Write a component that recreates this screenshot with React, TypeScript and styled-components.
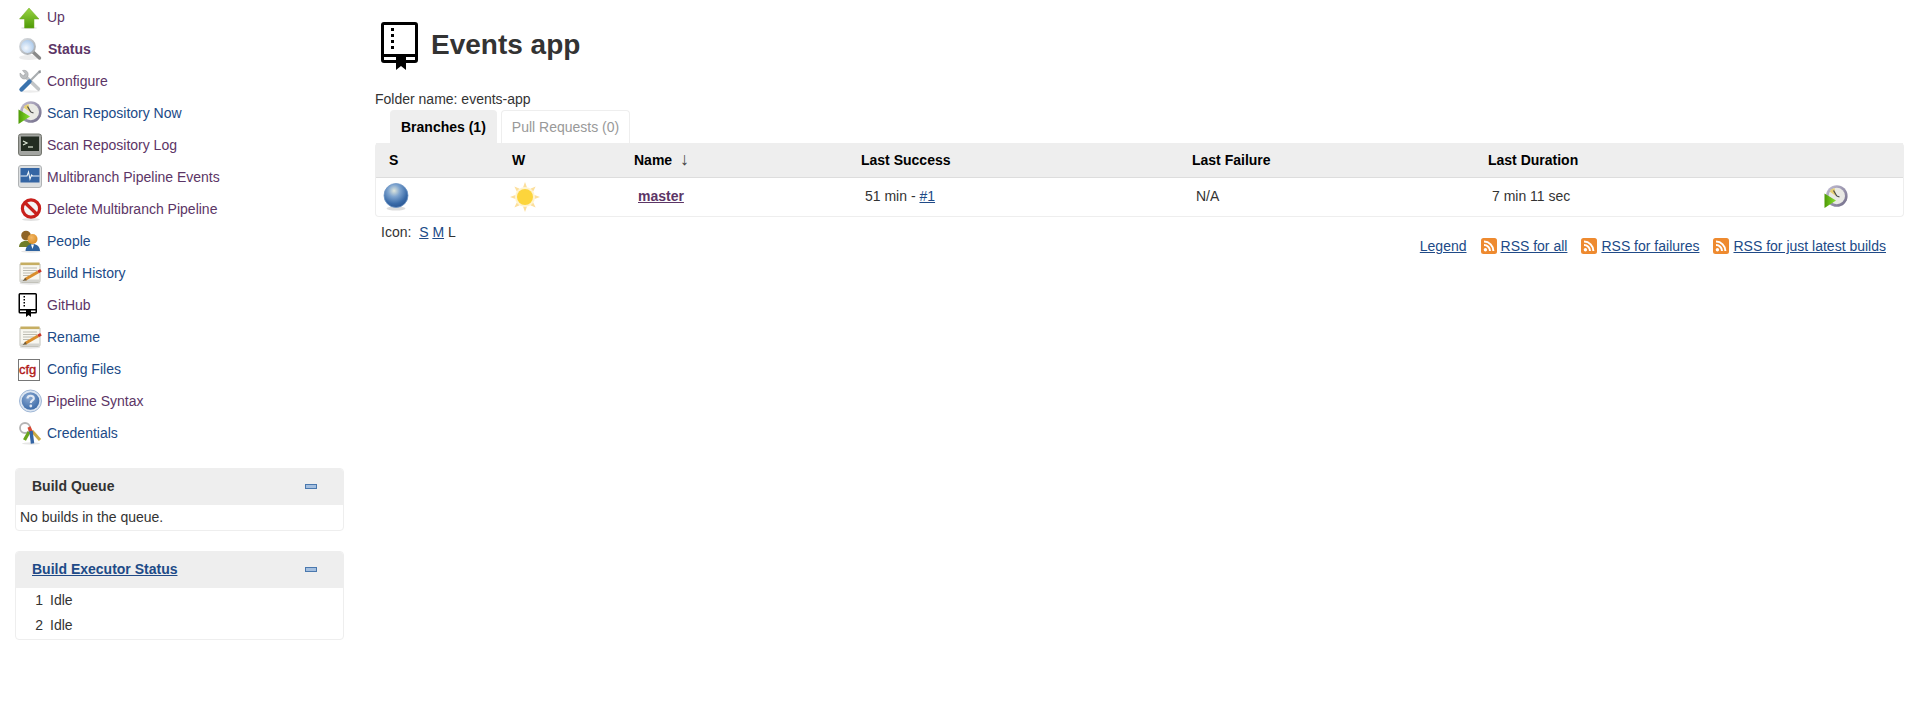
import React from 'react'
import styled, { createGlobalStyle } from 'styled-components'

const colors = {
  text: '#333333',
  link: '#204a87',
  visited: '#5c3566',
  panelHead: '#eeeeee',
  border: '#eeeeee',
}

const GlobalStyle = createGlobalStyle`
  html, body {
    margin: 0;
    padding: 0;
    background: #ffffff;
    color: ${colors.text};
    font-family: "Liberation Sans", Arial, sans-serif;
    font-size: 14px;
  }
`

function ArrowUpIcon() {
  return (
    <svg width="24" height="24" viewBox="0 0 24 24">
      <defs>
        <linearGradient id="arrowFill" x1="0" y1="0" x2="0" y2="1">
          <stop offset="0" stopColor="#9ad544" />
          <stop offset="1" stopColor="#4e9a06" />
        </linearGradient>
      </defs>
      <ellipse cx="11" cy="23" rx="8" ry="1" fill="#e2e2e2" />
      <path d="M11 3 L21 14 H16 V23 H6.5 V14 H1.5 Z" fill="url(#arrowFill)" stroke="#72ab24" strokeWidth="0.5" />
    </svg>
  )
}

function SearchIcon() {
  return (
    <svg width="24" height="24" viewBox="0 0 24 24">
      <defs>
        <radialGradient id="lensFill" cx="0.4" cy="0.6" r="0.7">
          <stop offset="0" stopColor="#f4f8fd" />
          <stop offset="1" stopColor="#9cc0e8" />
        </radialGradient>
        <linearGradient id="lensRing" x1="0" y1="0" x2="1" y2="1">
          <stop offset="0" stopColor="#d8dce0" />
          <stop offset="1" stopColor="#a3a8ad" />
        </linearGradient>
      </defs>
      <ellipse cx="11" cy="20.5" rx="10" ry="2.5" fill="#ececec" />
      <path d="M15 15 L21.5 21" stroke="#8a8a8a" strokeWidth="3.4" strokeLinecap="round" />
      <circle cx="9.5" cy="9.5" r="7.4" fill="url(#lensFill)" stroke="url(#lensRing)" strokeWidth="2" />
    </svg>
  )
}

function ToolsIcon() {
  return (
    <svg width="24" height="24" viewBox="0 0 24 24">
      <ellipse cx="12" cy="22.5" rx="10" ry="1.2" fill="#ececec" />
      <path d="M7 7 L20.5 20" stroke="#c2c5c7" strokeWidth="3.6" strokeLinecap="round" />
      <path d="M2 4 L5.5 7 L7.5 5 L4.5 1.5 C8 0.5 11 3 10 7 L7.5 10 C4 10.5 1.5 8 2 4 Z" fill="#bcbfc1" stroke="#96999b" strokeWidth="0.5" />
      <path d="M12 12 L21 3" stroke="#a9adb0" strokeWidth="2.2" />
      <path d="M20 2 L22.5 1 L23 3.5 L21.5 4.5 Z" fill="#8e9295" />
      <path d="M3.5 20.5 L11.5 12.5" stroke="#3a73ad" strokeWidth="4.4" strokeLinecap="round" />
    </svg>
  )
}

function ClockPlayIcon() {
  return (
    <svg width="24" height="24" viewBox="0 0 24 24">
      <defs>
        <linearGradient id="clockRing" x1="0" y1="0" x2="1" y2="1">
          <stop offset="0" stopColor="#c6c1d6" />
          <stop offset="1" stopColor="#6f6a86" />
        </linearGradient>
        <linearGradient id="playFill" x1="0" y1="0" x2="1" y2="0">
          <stop offset="0" stopColor="#4e9a06" />
          <stop offset="1" stopColor="#8ae234" />
        </linearGradient>
      </defs>
      <circle cx="12.8" cy="11" r="10.8" fill="url(#clockRing)" />
      <circle cx="12.8" cy="11" r="8.2" fill="#e9e9e4" />
      <path d="M12 11 L10.5 3 A8.2 8.2 0 0 0 5.6 6.5 Z" fill="#e6cf72" />
      <path d="M12.8 11 L9.5 5.5 M12.8 11 L15.5 12" stroke="#4a4a4a" strokeWidth="1.2" />
      <path d="M0.5 8.5 L12 15.5 L0.5 23 Z" fill="url(#playFill)" />
    </svg>
  )
}

function TerminalIcon() {
  return (
    <svg width="24" height="24" viewBox="0 0 24 24">
      <rect x="0.5" y="1" width="23" height="21.5" rx="2.5" fill="#a3a5a1" stroke="#74766f" />
      <rect x="3" y="3.5" width="18" height="14.5" fill="#232c22" />
      <path d="M5 8 L9 10 L5 12" fill="none" stroke="#dfe8d8" strokeWidth="1.2" />
      <path d="M10 14 H15" stroke="#dfe8d8" strokeWidth="1.2" />
    </svg>
  )
}

function MonitorIcon() {
  return (
    <svg width="24" height="24" viewBox="0 0 24 24">
      <rect x="0.5" y="0.5" width="23" height="22" rx="2.5" fill="#dcdfe1" stroke="#b0b3b5" />
      <rect x="2.5" y="3" width="19" height="14.5" fill="#3465a4" />
      <path d="M2.5 11 H9 L10.5 7 L12 14 L13.5 10 L14.5 11 H21.5" fill="none" stroke="#eef3f8" strokeWidth="1.1" />
    </svg>
  )
}

function NoEntryIcon() {
  return (
    <svg width="24" height="24" viewBox="0 0 24 24">
      <ellipse cx="13" cy="22.5" rx="9" ry="1.4" fill="#e2e2e2" />
      <circle cx="13" cy="11.5" r="8.6" fill="#f4f4f4" stroke="#c8201c" strokeWidth="3.2" />
      <path d="M6.8 5.5 L19.2 17.5" stroke="#c8201c" strokeWidth="3.2" />
    </svg>
  )
}

function PeopleIcon() {
  return (
    <svg width="24" height="24" viewBox="0 0 24 24">
      <defs>
        <radialGradient id="headFront" cx="0.4" cy="0.35" r="0.7">
          <stop offset="0" stopColor="#f3b866" />
          <stop offset="1" stopColor="#d98a22" />
        </radialGradient>
      </defs>
      <ellipse cx="13" cy="22.5" rx="10" ry="1.2" fill="#e6e6e6" />
      <circle cx="8" cy="6.5" r="4.8" fill="#8f6426" />
      <path d="M1 18 C1 9.5 15 9.5 15 18 Z" fill="#6f7d2a" />
      <path d="M7.5 22 C7.5 12.5 22 12.5 22 22 Z" fill="#2f639f" />
      <circle cx="14.5" cy="10" r="5" fill="url(#headFront)" />
      <path d="M13 15.5 H16 L14.5 20 Z" fill="#ffffff" />
    </svg>
  )
}

function NotepadIcon() {
  return (
    <svg width="24" height="24" viewBox="0 0 24 24">
      <ellipse cx="12" cy="22.5" rx="10.5" ry="1.2" fill="#e6e6e6" />
      <path d="M2 3 H22 V20 Q22 21.5 20.5 21.5 H3.5 Q2 21.5 2 20 Z" fill="#f8f7f0" stroke="#c0c0b8" />
      <rect x="2.5" y="1.5" width="19" height="2.6" fill="#c6ae62" />
      <rect x="2.5" y="18.5" width="19" height="2.6" fill="#d4d4cf" />
      <path d="M5 7 H19 M5 9.5 H19 M5 12 H16 M5 14.5 H11" stroke="#bdbcb2" strokeWidth="1" />
      <path d="M7 18.5 L20 11" stroke="#d98e2c" strokeWidth="3" />
      <path d="M20 11 L23 9.2" stroke="#c8382a" strokeWidth="3" />
      <path d="M4.5 20 L7.5 16.8 L8.8 19.2 Z" fill="#6b5a3c" />
    </svg>
  )
}

function BookIcon({ size }: { size: number }) {
  return (
    <svg width={size} height={size} viewBox="0 0 48 48">
      <path
        fillRule="evenodd"
        d="M4 0 H35 Q38 0 38 3 V38 Q38 41 35 41 H26 V48 L21 44 L16 48 V41 H4 Q1 41 1 38 V3 Q1 0 4 0 Z M4 3 V32 H35 V3 Z M4 35 V38 H16 V35 Z M26 35 V38 H35 V35 Z"
        fill="#000"
      />
      <path d="M11 6 H14 V9 H11 Z M11 12 H14 V15 H11 Z M11 18 H14 V21 H11 Z M11 24 H14 V27 H11 Z" fill="#000" />
    </svg>
  )
}

function CfgIcon() {
  return (
    <svg width="24" height="24" viewBox="0 0 24 24">
      <rect x="0.5" y="2.5" width="21" height="21" fill="#fff" stroke="#777" />
      <text x="1" y="17" fontFamily="Liberation Sans, sans-serif" fontSize="13" stroke="#b01818" strokeWidth="0.4" fill="#b01818">
        cfg
      </text>
    </svg>
  )
}

function HelpIcon() {
  return (
    <svg width="24" height="24" viewBox="0 0 24 24">
      <defs>
        <radialGradient id="helpFill" cx="0.4" cy="0.3" r="0.8">
          <stop offset="0" stopColor="#8aa9d2" />
          <stop offset="1" stopColor="#3465a4" />
        </radialGradient>
      </defs>
      <circle cx="12.5" cy="12" r="11" fill="#dbe5f1" stroke="#9fb7d6" />
      <circle cx="12.5" cy="12" r="8.8" fill="url(#helpFill)" />
      <path d="M9.5 9.5 C9.5 5.8 15.8 5.8 15.8 9.5 C15.8 11.5 12.8 11.5 12.8 14" fill="none" stroke="#dfe7f2" strokeWidth="2.2" />
      <circle cx="12.8" cy="17" r="1.4" fill="#dfe7f2" />
    </svg>
  )
}

function KeysIcon() {
  return (
    <svg width="24" height="24" viewBox="0 0 24 24">
      <ellipse cx="13" cy="22.5" rx="9" ry="1.2" fill="#e6e6e6" />
      <circle cx="7" cy="7" r="5" fill="none" stroke="#b4b4b4" strokeWidth="1.8" />
      <path d="M14 10 L22 19" stroke="#c9ab42" strokeWidth="3" />
      <path d="M11 6 L14 13" stroke="#d84a35" strokeWidth="3.4" />
      <path d="M11 11 L6.5 19" stroke="#6aa51c" strokeWidth="3.4" />
      <path d="M13 10 L14.5 22.5" stroke="#3465a4" strokeWidth="3.4" />
    </svg>
  )
}

function BallIcon() {
  return (
    <svg width="26" height="28" viewBox="0 0 26 28">
      <defs>
        <radialGradient id="ballFill" cx="0.42" cy="0.3" r="0.72">
          <stop offset="0" stopColor="#dfe6dc" />
          <stop offset="0.35" stopColor="#7ea4cf" />
          <stop offset="0.75" stopColor="#3a6ba8" />
          <stop offset="1" stopColor="#2a5692" />
        </radialGradient>
      </defs>
      <ellipse cx="13" cy="25.5" rx="9.5" ry="2" fill="#dddddd" />
      <circle cx="13" cy="12.5" r="12" fill="url(#ballFill)" stroke="#6f97c6" strokeWidth="0.8" />
    </svg>
  )
}

function SunIcon() {
  const rays = [0, 45, 90, 135, 180, 225, 270, 315]
  return (
    <svg width="30" height="30" viewBox="0 0 30 30">
      {rays.map((angle) => (
        <path key={angle} d="M13 5.5 L15 0 L17 5.5 Z" fill="#fcdf9c" transform={`rotate(${angle} 15 15)`} />
      ))}
      <circle cx="15" cy="15" r="10" fill="#fef3cf" />
      <circle cx="15" cy="15" r="8" fill="#fcd53c" />
    </svg>
  )
}

function RssIcon() {
  return (
    <svg width="16" height="16" viewBox="0 0 16 16">
      <rect width="16" height="16" rx="2.5" fill="#ee8a2f" />
      <circle cx="4.4" cy="11.8" r="1.7" fill="#fff" />
      <path d="M3 7 A6 6 0 0 1 9 13 M3 3.6 A9.4 9.4 0 0 1 12.4 13" fill="none" stroke="#fff" strokeWidth="2" />
    </svg>
  )
}

function MinusIcon() {
  return (
    <svg width="12" height="5" viewBox="0 0 12 5">
      <rect x="0.5" y="0.5" width="11" height="4" fill="#a4bfdf" stroke="#4a78ae" />
    </svg>
  )
}

const tasks = [
  { label: 'Up', icon: <ArrowUpIcon />, visited: true },
  { label: 'Status', icon: <SearchIcon />, visited: true, current: true },
  { label: 'Configure', icon: <ToolsIcon />, visited: true },
  { label: 'Scan Repository Now', icon: <ClockPlayIcon /> },
  { label: 'Scan Repository Log', icon: <TerminalIcon />, visited: true },
  { label: 'Multibranch Pipeline Events', icon: <MonitorIcon />, visited: true },
  { label: 'Delete Multibranch Pipeline', icon: <NoEntryIcon />, visited: true },
  { label: 'People', icon: <PeopleIcon /> },
  { label: 'Build History', icon: <NotepadIcon /> },
  { label: 'GitHub', icon: <BookIcon size={24} />, visited: true },
  { label: 'Rename', icon: <NotepadIcon /> },
  { label: 'Config Files', icon: <CfgIcon /> },
  { label: 'Pipeline Syntax', icon: <HelpIcon />, visited: true },
  { label: 'Credentials', icon: <KeysIcon /> },
]

export default function App() {
  return (
    <>
      <GlobalStyle />
      <Page>
        <SidePanel>
          <Tasks>
            {tasks.map((task) => (
              <Task key={task.label}>
                <TaskIcon>{task.icon}</TaskIcon>
                <TaskLink href="#" $visited={task.visited} $current={task.current}>
                  {task.label}
                </TaskLink>
              </Task>
            ))}
          </Tasks>

          <Pane>
            <PaneHeader>
              <PaneTitle>Build Queue</PaneTitle>
              <MinusIcon />
            </PaneHeader>
            <QueueBody>No builds in the queue.</QueueBody>
          </Pane>

          <Pane>
            <PaneHeader>
              <PaneTitleLink href="#">Build Executor Status</PaneTitleLink>
              <MinusIcon />
            </PaneHeader>
            <ExecutorBody>
              <ExecutorRow>
                <ExecutorNumber>1</ExecutorNumber>
                <span>Idle</span>
              </ExecutorRow>
              <ExecutorRow>
                <ExecutorNumber>2</ExecutorNumber>
                <span>Idle</span>
              </ExecutorRow>
            </ExecutorBody>
          </Pane>
        </SidePanel>

        <Main>
          <Heading>
            <BookIcon size={48} />
            <Title>Events app</Title>
          </Heading>
          <FolderName>Folder name: events-app</FolderName>
          <Tabs>
            <Tab $active>Branches (1)</Tab>
            <Tab>Pull Requests (0)</Tab>
          </Tabs>
          <Projects>
            <colgroup>
              <col width="123" />
              <col width="122" />
              <col width="227" />
              <col width="331" />
              <col width="296" />
              <col width="338" />
              <col />
            </colgroup>
            <thead>
              <tr>
                <HeadCell>S</HeadCell>
                <HeadCell>W</HeadCell>
                <HeadCell>
                  Name <SortArrow>↓</SortArrow>
                </HeadCell>
                <HeadCell>Last Success</HeadCell>
                <HeadCell>Last Failure</HeadCell>
                <HeadCell>Last Duration</HeadCell>
                <HeadCell />
              </tr>
            </thead>
            <tbody>
              <tr>
                <IconCell $inset={7}>
                  <BallIcon />
                </IconCell>
                <IconCell $inset={11}>
                  <SunIcon />
                </IconCell>
                <DataCell>
                  <JobLink href="#">master</JobLink>
                </DataCell>
                <DataCell>
                  51 min - <PlainLink href="#">#1</PlainLink>
                </DataCell>
                <DataCell>N/A</DataCell>
                <DataCell>7 min 11 sec</DataCell>
                <IconCell $inset={11}>
                  <ClockPlayIcon />
                </IconCell>
              </tr>
            </tbody>
          </Projects>
          <TableFooter>
            <IconSizes>
              Icon:&nbsp; <PlainLink href="#">S</PlainLink> <PlainLink href="#">M</PlainLink> L
            </IconSizes>
            <RssBar>
              <PlainLink href="#">Legend</PlainLink>
              <RssItem>
                <RssIcon />
                <PlainLink href="#">RSS for all</PlainLink>
              </RssItem>
              <RssItem>
                <RssIcon />
                <PlainLink href="#">RSS for failures</PlainLink>
              </RssItem>
              <RssItem>
                <RssIcon />
                <PlainLink href="#">RSS for just latest builds</PlainLink>
              </RssItem>
            </RssBar>
          </TableFooter>
        </Main>
      </Page>
    </>
  )
}

const Page = styled.div`
  display: flex;
  height: 712px;
  overflow: hidden;
`

const SidePanel = styled.aside`
  width: 329px;
  flex: none;
  padding: 1px 0 0 15px;
`

const Tasks = styled.div`
  display: flex;
  flex-direction: column;
  margin-bottom: 19px;
`

const Task = styled.div`
  display: flex;
  align-items: center;
  height: 32px;
  padding-left: 3px;
`

const TaskIcon = styled.span`
  display: flex;
  width: 24px;
  height: 24px;
  margin-right: 5px;
`

const TaskLink = styled.a<{ $visited?: boolean; $current?: boolean }>`
  color: ${(p) => (p.$visited ? colors.visited : colors.link)};
  font-weight: ${(p) => (p.$current ? 700 : 400)};
  text-decoration: none;
  ${(p) => p.$current && 'margin-left: 1px;'}
`

const Pane = styled.section`
  border: 1px solid ${colors.border};
  border-radius: 4px;
  margin-bottom: 20px;
  overflow: hidden;
`

const PaneHeader = styled.div`
  display: flex;
  align-items: center;
  justify-content: space-between;
  height: 36px;
  padding: 0 26px 2px 16px;
  box-sizing: border-box;
  background: ${colors.panelHead};
`

const PaneTitle = styled.span`
  font-weight: 700;
`

const PaneTitleLink = styled.a`
  font-weight: 700;
  color: ${colors.link};
`

const QueueBody = styled.div`
  height: 25px;
  line-height: 24px;
  padding-left: 4px;
`

const ExecutorBody = styled.div`
  padding-bottom: 1px;
`

const ExecutorRow = styled.div`
  display: flex;
  align-items: center;
  box-sizing: border-box;
  height: 25px;
  padding-bottom: 2px;
`

const ExecutorNumber = styled.span`
  width: 27px;
  margin-right: 7px;
  text-align: right;
`

const Main = styled.main`
  flex: 1;
  min-width: 0;
  padding: 22px 0 0 31px;
  margin-right: 1px;
`

const Heading = styled.div`
  display: flex;
  align-items: center;
  padding-left: 5px;
  height: 48px;
`

const Title = styled.h1`
  margin: 0 0 3px 3px;
  font-size: 28px;
  font-weight: 700;
  line-height: 1;
`

const FolderName = styled.div`
  margin-top: 21px;
  line-height: 16px;
`

const Tabs = styled.div`
  display: flex;
  gap: 4px;
  margin-top: 3px;
  padding-left: 15px;
`

const Tab = styled.div<{ $active?: boolean }>`
  display: flex;
  align-items: center;
  height: 33px;
  box-sizing: border-box;
  padding: 0 10px;
  border: 1px solid ${colors.border};
  border-bottom: none;
  border-radius: 4px 4px 0 0;
  background: ${(p) => (p.$active ? colors.panelHead : '#ffffff')};
  color: ${(p) => (p.$active ? '#000000' : '#999999')};
  font-weight: ${(p) => (p.$active ? 700 : 400)};
`

const Projects = styled.table`
  width: 100%;
  border-collapse: separate;
  border-spacing: 0;
  table-layout: fixed;
  border: 1px solid ${colors.border};
  border-top: none;
  border-radius: 4px;
`

const HeadCell = styled.th`
  height: 34px;
  padding: 0 13px;
  background: ${colors.panelHead};
  border-bottom: 1px solid #dddddd;
  color: #000000;
  font-weight: 700;
  text-align: left;
  white-space: nowrap;
`

const SortArrow = styled.span`
  font-weight: 400;
  font-size: 18px;
  line-height: 14px;
  margin-left: 4px;
  color: #444444;
`

const DataCell = styled.td`
  height: 36px;
  padding: 0 17px 2px;
`

const IconCell = styled.td<{ $inset: number }>`
  padding: 0 0 0 ${(p) => p.$inset}px;
  line-height: 0;
`

const JobLink = styled.a`
  color: ${colors.visited};
  font-weight: 700;
`

const PlainLink = styled.a`
  color: ${colors.link};
`

const TableFooter = styled.div`
  display: flex;
  justify-content: space-between;
  padding: 7px 18px 0 6px;
`

const IconSizes = styled.div`
  line-height: 16px;
`

const RssBar = styled.div`
  display: flex;
  align-items: center;
  gap: 14px;
  margin-top: 14px;
`

const RssItem = styled.span`
  display: flex;
  align-items: center;
  gap: 4px;
`
